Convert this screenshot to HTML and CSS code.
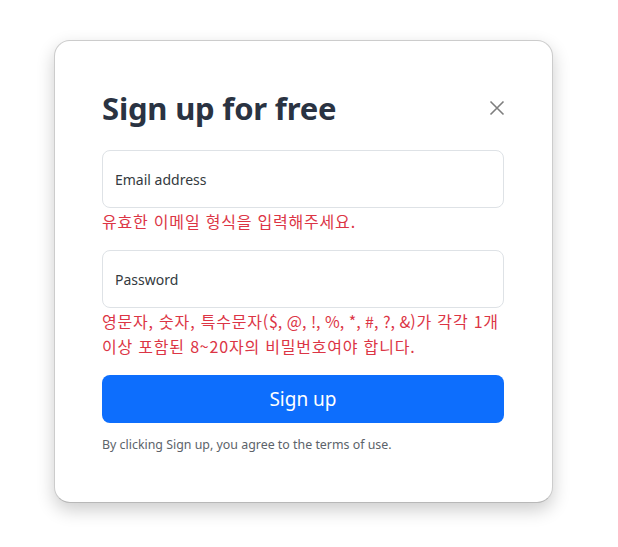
FILE: index.html
```html
<!DOCTYPE html>
<html lang="ko">
<head>
<meta charset="utf-8">
<title>Sign up</title>
<link rel="stylesheet" href="styles.css">
</head>
<body>
<div class="page">
  <div class="modal">
    <div class="modal-header">
      <h1 class="title">Sign up for free</h1>
      <button class="close" type="button" aria-label="Close">
        <svg width="16" height="16" viewBox="0 0 16 16"><path d="M1.5 1.5 L14.5 14.5 M14.5 1.5 L1.5 14.5" stroke="#000" stroke-width="1.6" fill="none"/></svg>
      </button>
    </div>
    <div class="modal-body">
      <div class="field"><span class="label">Email address</span></div>
      <div class="error">유효한 이메일 형식을 입력해주세요.</div>
      <div class="field"><span class="label">Password</span></div>
      <div class="error">영문자, 숫자, 특수문자(<span class="sym">$, @, !, %, *, #, ?, &amp;</span>)가 각각 1개<br>이상 포함된 8~20자의 비밀번호여야 합니다.</div>
      <button class="submit" type="button">Sign up</button>
      <p class="terms">By clicking Sign up, you agree to the terms of use.</p>
    </div>
  </div>
</div>
</body>
</html>
```

FILE: styles.css
```css
* { box-sizing: border-box; }
html, body { margin: 0; background: #fff; }
body { font-family: "Noto Sans", "Noto Sans CJK KR", sans-serif; color: #212529; }
.page { padding: 40px 0 0 54px; min-height: 547px; }
.modal {
  width: 499px;
  background: #fff;
  border: 1px solid rgba(0,0,0,0.2);
  border-bottom-color: rgba(0,0,0,0.28);
  border-radius: 16px;
  box-shadow: 0 7px 18px rgba(0,0,0,0.2);
}
.modal-header {
  display: flex;
  align-items: center;
  justify-content: space-between;
  padding: 48px 48px 23px 47px;
}
.title {
  margin: 0;
  font-size: 31px;
  font-weight: 700;
  line-height: 38px;
  color: #2a3342;
  letter-spacing: -0.2px;
}
.close {
  border: 0;
  background: none;
  padding: 0;
  width: 16px;
  height: 16px;
  opacity: 0.5;
  display: flex;
  margin-right: -1px;
}
.modal-body { padding: 0 48px 48px 47px; }
.field {
  height: 58px;
  border: 1px solid #dee2e6;
  border-radius: 8px;
  display: flex;
  align-items: center;
  padding: 0 12px;
}
.label { font-size: 14px; color: #343a40; }
.error {
  color: #dc3545;
  font-family: "Noto Sans CJK KR", "Noto Sans", sans-serif;
  font-size: 16px;
  letter-spacing: 0.8px;
  line-height: 25px;
  margin: 1px 0 16px 0;
  word-break: keep-all;
}
.sym { letter-spacing: 0; }
.submit {
  display: block;
  width: 100%;
  height: 48px;
  border: 0;
  border-radius: 8px;
  background: #0d6efd;
  color: #fff;
  font-family: "Noto Sans", sans-serif;
  font-size: 19px;
  cursor: pointer;
}
.terms {
  margin: 13px 0 0 0;
  font-size: 12.4px;
  line-height: 18px;
  color: #5c636a;
}
```
